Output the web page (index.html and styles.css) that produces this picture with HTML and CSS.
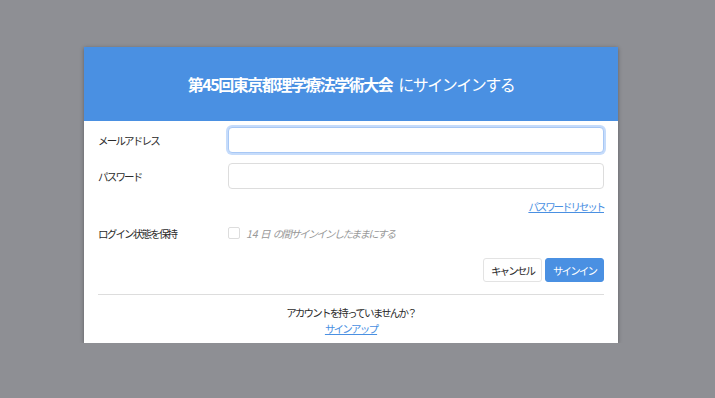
FILE: index.html
```html
<!DOCTYPE html>
<html lang="ja">
<head>
    <meta charset="UTF-8" />
    <title>サインイン</title>
    <link rel="stylesheet" href="styles.css">
</head>
<body>

<div class="card">
    <div class="card-header">
        <h1><strong>第45回東京都理学療法学術大会</strong> にサインインする</h1>
    </div>
    <form class="card-body">
        <div class="form-row">
            <label for="email">メールアドレス</label>
            <input type="text" id="email" class="field focused">
        </div>
        <div class="form-row">
            <label for="password">パスワード</label>
            <input type="password" id="password" class="field">
        </div>
        <div class="reset-row">
            <a href="#" class="link">パスワードリセット</a>
        </div>
        <div class="form-row remember-row">
            <label>ログイン状態を保持</label>
            <span class="remember">
                <span class="checkbox"></span>
                <em><span class="num">14 日 </span>の間サインインしたままにする</em>
            </span>
        </div>
        <div class="actions">
            <button type="button" class="btn btn-default">キャンセル</button>
            <button type="button" class="btn btn-primary">サインイン</button>
        </div>
        <hr>
        <div class="signup">
            <p>アカウントを持っていませんか？</p>
            <a href="#" class="link">サインアップ</a>
        </div>
    </form>
</div>

</body>
</html>
```

FILE: styles.css
```css
body {
    background: #8e8f94;
    font-family: 'Noto Sans CJK JP', 'Noto Sans', sans-serif;
    font-size: 10.5px;
    letter-spacing: -1.8px;
    color: #2b2b2b;
    margin: 0;
    padding: 47px 0 0 84px;
}

.card {
    width: 534px;
    background: #fff;
    box-shadow: 0 1px 4px rgba(0,0,0,0.35);
}

.card-header {
    background: #4a90e2;
    height: 74px;
    display: flex;
    align-items: center;
    justify-content: center;
}

.card-header h1 {
    margin: 0;
    font-size: 16px;
    font-weight: normal;
    color: #fff;
    letter-spacing: -1.5px;
    word-spacing: 4px;
}

.card-header strong {
    font-weight: bold;
}

.card-body {
    padding: 6px 14px 6px 14px;
}

.form-row {
    display: flex;
    align-items: center;
    margin-bottom: 10px;
}

.form-row label {
    width: 130px;
    flex: none;
}

.field {
    flex: 1;
    height: 26px;
    box-sizing: border-box;
    border: 1px solid #ddd;
    border-radius: 4px;
    padding: 0 8px;
    margin: 0;
    font: inherit;
    outline: none;
}

.field.focused {
    border-color: #a8c8f5;
    box-shadow: 0 0 0 2px #c6dcfb;
}

.reset-row {
    text-align: right;
    margin-top: 6px;
    height: 18px;
}

.link {
    color: #4a90e2;
    text-decoration: underline;
}

.reset-row .link {
    letter-spacing: -2.1px;
}

.remember-row {
    margin-top: 6px;
    height: 20px;
}

.remember {
    display: flex;
    align-items: center;
    gap: 6px;
    color: #999;
}

.checkbox {
    width: 10px;
    height: 10px;
    border: 1px solid #ddd;
    border-radius: 2px;
}

.remember em {
    font-style: italic;
}

.num {
    letter-spacing: 0;
}

.actions {
    display: flex;
    justify-content: flex-end;
    gap: 3px;
    margin-top: 15px;
}

.btn {
    height: 24px;
    padding: 0 7px;
    border-radius: 3px;
    font: inherit;
    letter-spacing: -1.9px;
    cursor: pointer;
}

.btn-default {
    background: #fff;
    border: 1px solid #e3e3e3;
    color: #2b2b2b;
}

.btn-primary {
    background: #4a90e2;
    border: 1px solid #4a90e2;
    color: #fff;
}

hr {
    border: 0;
    border-top: 1px solid #ddd;
    margin: 12px 0 10px 0;
}

.signup {
    text-align: center;
    line-height: 16px;
}

.signup p {
    margin: 0;
}
```
